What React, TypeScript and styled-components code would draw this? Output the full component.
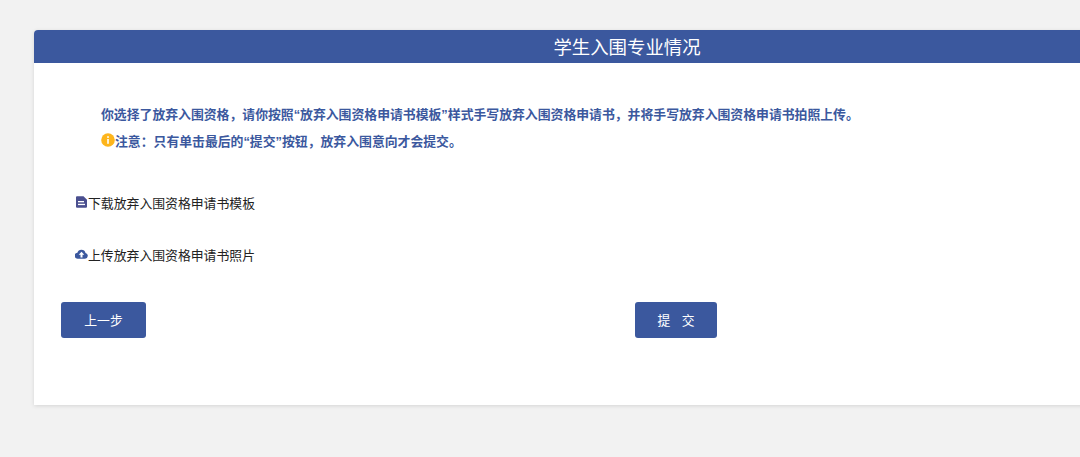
import React from "react";
import styled, { createGlobalStyle } from "styled-components";

const Global = createGlobalStyle`
  html, body { margin: 0; padding: 0; background: #f2f2f2; overflow: hidden; }
  body { font-family: "Liberation Sans", "Noto Sans CJK SC", sans-serif; }
`;
const Page = styled.div`
  width: 1080px; height: 457px; overflow: hidden; box-sizing: border-box;
  padding: 30px 0 0 34px; background: #f2f2f2;
`;
const Card = styled.section`
  width: 1186px; height: 375px; background: #fff; border-radius: 4px 4px 0 0;
  box-shadow: 0 1px 4px rgba(0,0,0,.12); box-sizing: border-box;
`;
const Header = styled.header`
  height: 33px; background: #3b589e; color: #fff; border-radius: 4px 4px 0 0;
  font-size: 18.4px; line-height: 36px; text-align: center;
`;
const Notice = styled.div`
  padding: 43px 0 0 67px; color: #3b589e; font-size: 12.85px; font-weight: 700;
`;
const NoticeLine = styled.p`
  margin: 0 0 9px; height: 18px; line-height: 18px; display: flex; align-items: center; white-space: nowrap;
`;
const Warn = styled.svg`
  width: 14px; height: 14px; flex: none; margin-top: -5px;
`;
const Actions = styled.div`
  padding: 35px 0 0 41px; display: flex; flex-direction: column; gap: 34px;
`;
const ActionRow = styled.div`
  height: 18px; line-height: 18px; display: flex; align-items: center; font-size: 12.85px; color: #222; white-space: nowrap;
`;
const RowIcon = styled.svg`
  width: 13px; height: 12px; flex: none; margin-top: -4px;
`;
const Buttons = styled.div`
  margin-top: 37px; padding-left: 27px; display: flex;
`;
const Button = styled.button<{ $w: number; $ml?: number }>`
  width: ${p => p.$w}px; height: 36px; margin-left: ${p => p.$ml ?? 0}px; padding: 0 0 2px;
  background: #3b589e; color: #fff; border: none; border-radius: 3px;
  font: 12.8px "Noto Sans CJK SC", "Liberation Sans", sans-serif; white-space: pre;
`;

export default function App() {
  return (
    <Page>
      <Global />
      <Card>
        <Header>学生入围专业情况</Header>
        <Notice>
          <NoticeLine>你选择了放弃入围资格，请你按照“放弃入围资格申请书模板”样式手写放弃入围资格申请书，并将手写放弃入围资格申请书拍照上传。</NoticeLine>
          <NoticeLine>
            <Warn viewBox="0 0 14 14">
              <circle cx="7" cy="7" r="6.8" fill="#fdb51c" />
              <rect x="6.2" y="3.2" width="1.6" height="1.7" fill="#fff" />
              <rect x="6.2" y="6" width="1.6" height="4.8" fill="#fff" />
            </Warn>
            注意：只有单击最后的“提交”按钮，放弃入围意向才会提交。
          </NoticeLine>
        </Notice>
        <Actions>
          <ActionRow>
            <RowIcon viewBox="0 0 13 12">
              <path d="M1 1.2A1 1 0 0 1 2 .2h6.5L12 3.7v7.1a1 1 0 0 1-1 1H2a1 1 0 0 1-1-1Z" fill="#4a4f8f" />
              <rect x="3" y="5" width="6" height="1.3" fill="#fff" />
              <rect x="3" y="7.8" width="7" height="1.3" fill="#fff" />
            </RowIcon>
            下载放弃入围资格申请书模板
          </ActionRow>
          <ActionRow>
            <RowIcon viewBox="0 0 13 12">
              <path d="M3 10.8A3 3 0 0 1 2.4 4.8 4.2 4.2 0 0 1 10.5 4.9 3 3 0 0 1 10 10.8Z" fill="#3b589e" />
              <path d="M6.5 3.8 9.3 6.8H7.5V9.6H5.5V6.8H3.7Z" fill="#fff" />
            </RowIcon>
            上传放弃入围资格申请书照片
          </ActionRow>
        </Actions>
        <Buttons>
          <Button $w={85}>上一步</Button>
          <Button $w={82} $ml={489}>提    交</Button>
        </Buttons>
      </Card>
    </Page>
  );
}
